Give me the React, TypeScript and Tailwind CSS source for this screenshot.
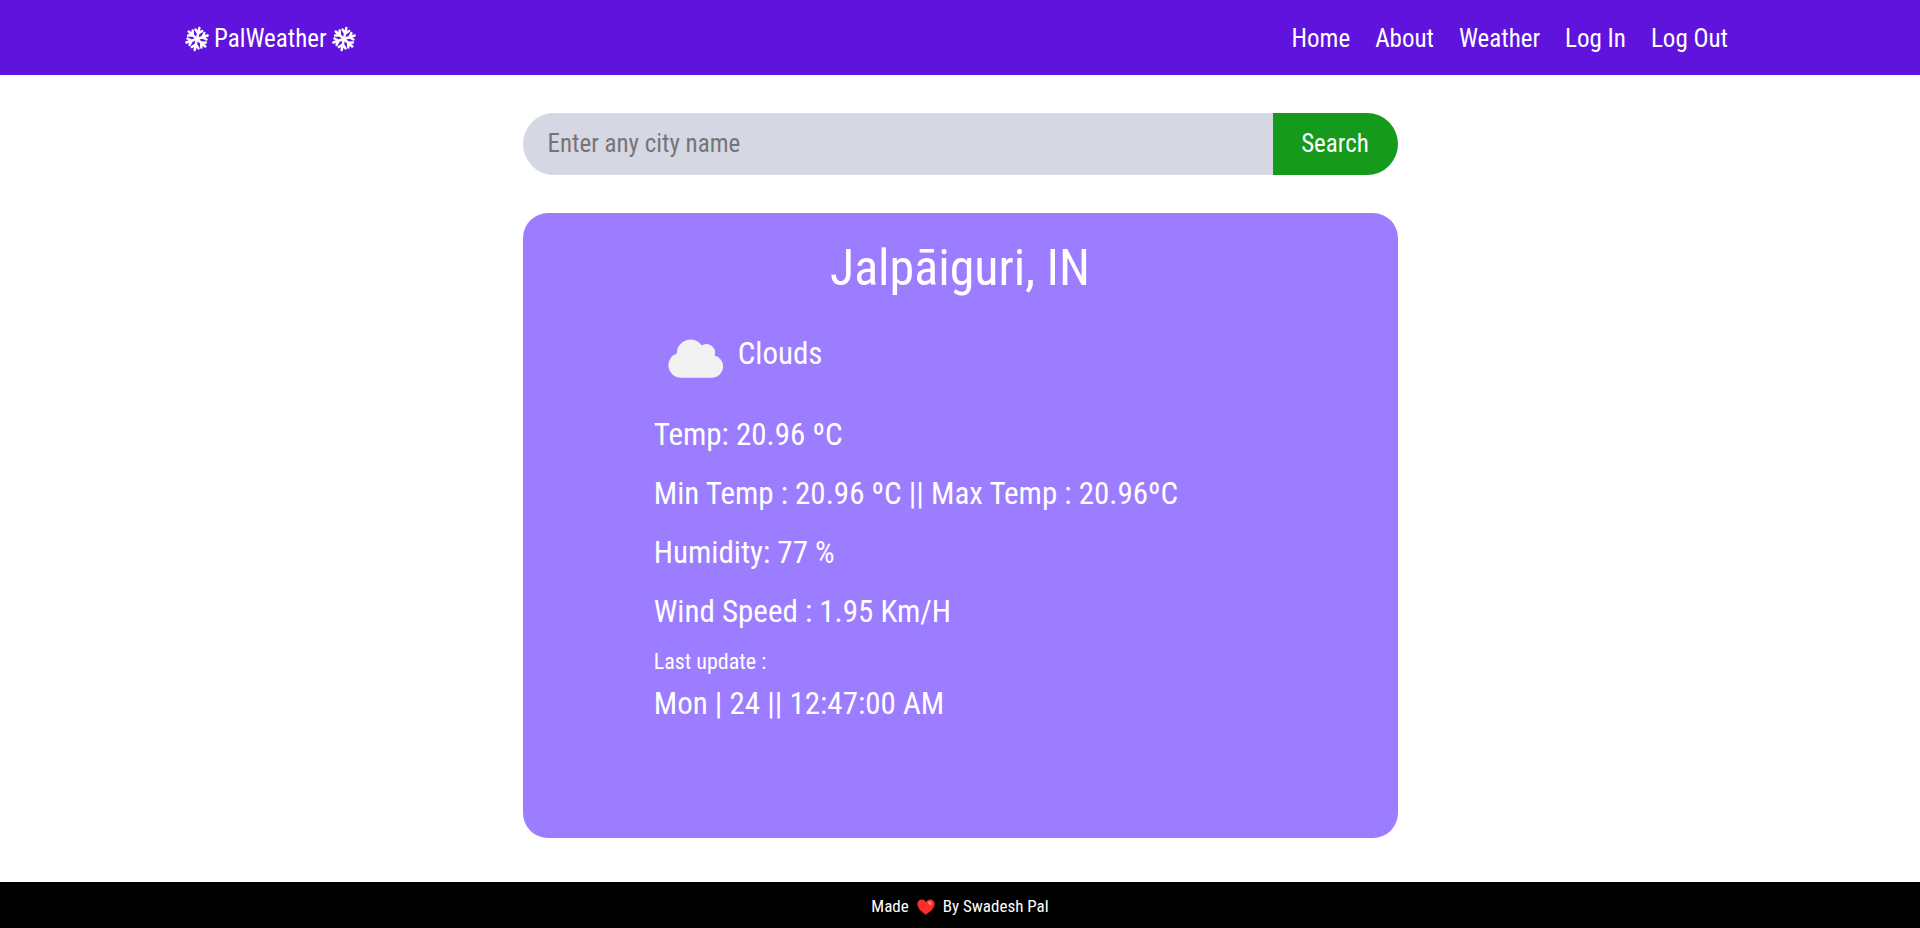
import { useState } from "react";
import type { FormEvent } from "react";

const links = ["Home", "About", "Weather", "Log In", "Log Out"];

const readings = [
  "Temp: 20.96 ºC",
  "Min Temp : 20.96 ºC || Max Temp : 20.96ºC",
  "Humidity: 77 %",
  "Wind Speed : 1.95 Km/H",
];

const arms = [0, 60, 120, 180, 240, 300];

function Snowflake() {
  return (
    <svg viewBox="-13 -13 26 26" className="size-[26px]" aria-hidden="true">
      <g fill="none" stroke="#fff" strokeWidth="2.5" strokeLinecap="round" transform="rotate(12)">
        {arms.map((a) => (
          <path key={a} d="M0 0V-11.200M0 -5.600L-3.400 -8.900M0 -5.600L3.400 -8.900" transform={`rotate(${a})`} />
        ))}
      </g>
    </svg>
  );
}

function Cloud() {
  return (
    <svg viewBox="0 0 56 40" className="h-10 w-14" aria-hidden="true">
      <path
        fill="#f2f2f2"
        d="M12.500 38.700A12.400 12.400 0 0 1 8.700 14.600A13.900 13.900 0 0 1 34 6.500A8.500 8.500 0 0 1 46.500 16.600A11.200 11.200 0 0 1 44.300 38.700Z"
      />
    </svg>
  );
}

function Heart() {
  return (
    <svg viewBox="0 0 18 16" className="h-4 w-[18px]" aria-hidden="true">
      <path
        fill="#f92f2f"
        d="M9 15.800C6.500 13.800.4 10 .4 5.100.4 2.200 2.300.4 4.700.4 6.700.4 8.300 1.600 9 3.300 9.700 1.600 11.300.4 13.300.4 15.700.4 17.600 2.200 17.600 5.100 17.600 10 11.500 13.800 9 15.800Z"
      />
      <ellipse cx="13" cy="4.300" rx="2.200" ry="1.600" fill="#ff7d6e" transform="rotate(35 13 4.300)" />
      <path d="M1.300 7.500C2.500 11.500 6.300 13.600 9 15.500" fill="none" stroke="#c4213f" strokeWidth="1" />
    </svg>
  );
}

export default function App() {
  const [city, setCity] = useState("");
  const submit = (e: FormEvent) => e.preventDefault();

  return (
    <div className="flex min-h-screen flex-col bg-white font-['Roboto_Condensed','Liberation_Sans_Narrow',Roboto,sans-serif] text-white">
      <header className="flex h-[75px] items-center justify-between bg-[#6013dd] pt-[2px] pr-48 pl-46 text-[25px]">
        <a href="#home" className="flex items-center gap-1">
          <Snowflake />
          PalWeather
          <Snowflake />
        </a>
        <nav className="flex gap-[25px]">
          {links.map((l) => (
            <a key={l} href="#nav">
              {l}
            </a>
          ))}
        </nav>
      </header>

      <main className="mx-auto flex w-[875px] max-w-full grow flex-col pt-[38px] pb-11">
        <form onSubmit={submit} className="flex h-[62px] text-[25px]">
          <input
            type="text"
            aria-label="City name"
            placeholder="Enter any city name"
            value={city}
            onChange={(e) => setCity(e.target.value)}
            className="min-w-0 grow rounded-l-full bg-[#d5d7e3] px-[25px] text-gray-900 outline-none placeholder:text-[#757575]"
          />
          <button type="submit" className="w-[125px] rounded-r-full bg-[#159a1c]">
            Search
          </button>
        </form>

        <section className="mt-[38px] grow rounded-[25px] bg-[#9c7dff] px-[15%] pt-[25px] text-[31px] leading-[59px]">
          <h1 className="text-center text-[50px] leading-[60px]">Jalpāiguri, IN</h1>
          <div className="mt-[26px] flex items-start gap-[14px] pl-[14px]">
            <div className="pt-[15px]">
              <Cloud />
            </div>
            <p>Clouds</p>
          </div>
          <div className="mt-[22px]">
            {readings.map((r) => (
              <p key={r}>{r}</p>
            ))}
          </div>
          <p className="text-[22px] leading-[42px]">Last update :</p>
          <p className="leading-[42px]">Mon | 24 || 12:47:00 AM</p>
        </section>
      </main>

      <footer className="flex h-[46px] items-center justify-center gap-2 bg-black pt-1 text-[17px]">
        <span>Made</span>
        <Heart />
        <span>By Swadesh Pal</span>
      </footer>
    </div>
  );
}
